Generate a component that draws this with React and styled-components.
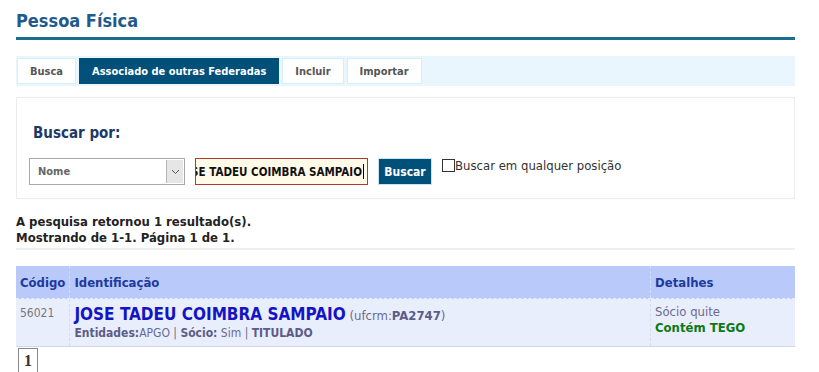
import React from "react";
import styled, { createGlobalStyle } from "styled-components";

const GlobalStyle = createGlobalStyle`
  body {
    margin: 0;
    background: #ffffff;
    font-family: "DejaVu Sans", Verdana, sans-serif;
    font-stretch: condensed;
    color: #222;
  }
`;

const Page = styled.div`
  padding: 0 24px 0 16px;
  width: 779px;
`;

const Title = styled.h1`
  margin: 0;
  padding-top: 10px;
  height: 27px;
  font-size: 18px;
  font-weight: bold;
  color: #1f5a8c;
  border-bottom: 3px solid #1a6e8e;
`;

const TabBar = styled.div`
  margin-top: 16px;
  height: 30px;
  background: #eaf6fd;
  display: flex;
  align-items: center;
  gap: 3px;
  padding-left: 1px;
`;

const Tab = styled.div`
  height: 24px;
  padding: 0 12px;
  display: flex;
  align-items: center;
  font-size: 11px;
  font-weight: bold;
  background: ${(p) => (p.$active ? "#00507a" : "#ffffff")};
  color: ${(p) => (p.$active ? "#ffffff" : "#555")};
  border: 1px solid ${(p) => (p.$active ? "#00507a" : "#d6eefa")};
`;

const SearchPanel = styled.div`
  margin-top: 11px;
  height: 100px;
  border: 1px solid #ececec;
  padding: 0 12px;
`;

const SearchLabel = styled.div`
  margin-top: 26px;
  padding-left: 4px;
  font-size: 15px;
  font-weight: bold;
  color: #1c3a66;
`;

const Controls = styled.div`
  margin-top: 16px;
  display: flex;
  align-items: flex-start;
`;

const Select = styled.div`
  width: 146px;
  height: 25px;
  border: 1px solid #a9a9a9;
  display: flex;
  align-items: center;
  justify-content: space-between;
  font-size: 11px;
  font-weight: bold;
  color: #666;
  padding-left: 8px;
`;

const SelectArrow = styled.div`
  width: 16px;
  height: 23px;
  margin-right: 1px;
  background: #e6e6e6;
  border-left: 1px solid #b5b5b5;
  display: flex;
  align-items: center;
  justify-content: center;
`;

const TextField = styled.div`
  margin-left: 10px;
  width: 168px;
  height: 25px;
  border: 1px solid #b03a2e;
  background: #fffbe8;
  font-size: 11.5px;
  font-weight: bold;
  color: #111;
  display: flex;
  align-items: center;
  justify-content: flex-end;
  overflow: hidden;
  white-space: nowrap;
  padding-right: 3px;
`;

const FieldText = styled.span`
  flex-shrink: 0;
`;

const Caret = styled.span`
  display: inline-block;
  flex-shrink: 0;
  width: 1px;
  height: 15px;
  background: #000;
  margin-left: 1px;
`;

const Button = styled.div`
  margin-left: 10px;
  width: 52px;
  height: 25px;
  background: #00507a;
  border: 1px solid #c8e4f4;
  color: #fff;
  font-size: 12px;
  font-weight: bold;
  display: flex;
  align-items: center;
  justify-content: center;
`;

const CheckLabel = styled.label`
  margin-left: 10px;
  display: flex;
  align-items: flex-start;
  font-size: 13px;
  color: #333;
  line-height: 15px;
`;

const CheckBox = styled.span`
  width: 11px;
  height: 11px;
  border: 1px solid #333;
  margin-top: 1px;
`;

const Summary = styled.div`
  margin-top: 15px;
  font-size: 13px;
  font-weight: bold;
  line-height: 16px;
  color: #222;
  padding-bottom: 2px;
  border-bottom: 2px solid #efefef;
`;

const Table = styled.table`
  margin-top: 16px;
  width: 100%;
  border-collapse: collapse;
  font-size: 13px;
`;

const HeadCell = styled.th`
  height: 32px;
  padding: 0 4px;
  text-align: left;
  background: #b9c9fa;
  color: #1d3a9e;
  font-weight: bold;
  border-left: 1px dashed #d2dcfb;
  border-bottom: 1px dashed #e6ecfd;
  width: ${(p) => p.$width || "auto"};
  &:first-child {
    border-left: none;
  }
`;

const Cell = styled.td`
  height: 42px;
  padding: 5px 4px 0;
  vertical-align: top;
  background: #e9eefd;
  border-left: 1px dashed #d6dcec;
  border-bottom: 1px solid #d4d8e4;
  &:first-child {
    border-left: none;
  }
`;

const Code = styled.div`
  font-size: 12px;
  color: #777;
  padding-top: 2px;
`;

const NameLine = styled.div`
  line-height: 20px;
`;

const Name = styled.span`
  font-size: 17px;
  font-weight: bold;
  color: #1414c4;
`;

const Meta = styled.span`
  font-size: 13px;
  color: #6a6a90;
  b {
    color: #5c5c88;
  }
`;

const SubLine = styled.div`
  font-size: 12px;
  color: #6a6a90;
  line-height: 15px;
  b {
    color: #5c5c88;
  }
`;

const Detail = styled.div`
  font-size: 13px;
  line-height: 16px;
  color: ${(p) => p.$color || "#6a6a90"};
  font-weight: ${(p) => (p.$bold ? "bold" : "normal")};
`;

const PageBox = styled.div`
  margin-top: 1px;
  margin-left: 2px;
  width: 18px;
  height: 23px;
  border: 1px solid #888;
  display: flex;
  align-items: center;
  justify-content: center;
  font-family: "Liberation Serif", serif;
  font-weight: bold;
  font-size: 16px;
  color: #333;
`;

export default function App() {
  const tabs = [
    { id: "busca", label: "Busca" },
    { id: "assoc", label: "Associado de outras Federadas", active: true },
    { id: "incluir", label: "Incluir" },
    { id: "importar", label: "Importar" },
  ];

  return (
    <>
      <GlobalStyle />
      <Page>
        <Title>Pessoa Física</Title>
        <TabBar>
          {tabs.map((tab) => (
            <Tab key={tab.id} $active={tab.active}>
              {tab.label}
            </Tab>
          ))}
        </TabBar>
        <SearchPanel>
          <SearchLabel>Buscar por:</SearchLabel>
          <Controls>
            <Select>
              Nome
              <SelectArrow>
                <svg width="9" height="6" viewBox="0 0 9 6">
                  <path d="M1 1 L4.5 4.5 L8 1" fill="none" stroke="#555" strokeWidth="1" />
                </svg>
              </SelectArrow>
            </Select>
            <TextField>
              <FieldText>JOSE TADEU COIMBRA SAMPAIO</FieldText>
              <Caret />
            </TextField>
            <Button>Buscar</Button>
            <CheckLabel>
              <CheckBox />
              Buscar em qualquer posição
            </CheckLabel>
          </Controls>
        </SearchPanel>
        <Summary>
          A pesquisa retornou 1 resultado(s).
          <br />
          Mostrando de 1-1. Página 1 de 1.
        </Summary>
        <Table>
          <thead>
            <tr>
              <HeadCell $width="43px">Código</HeadCell>
              <HeadCell>Identificação</HeadCell>
              <HeadCell $width="136px">Detalhes</HeadCell>
            </tr>
          </thead>
          <tbody>
            <tr>
              <Cell>
                <Code>56021</Code>
              </Cell>
              <Cell>
                <NameLine>
                  <Name>JOSE TADEU COIMBRA SAMPAIO</Name>{" "}
                  <Meta>
                    (ufcrm:<b>PA2747</b>)
                  </Meta>
                </NameLine>
                <SubLine>
                  <b>Entidades:</b>APGO | <b>Sócio:</b> Sim | <b>TITULADO</b>
                </SubLine>
              </Cell>
              <Cell>
                <Detail>Sócio quite</Detail>
                <Detail $color="#0c7a12" $bold>
                  Contém TEGO
                </Detail>
              </Cell>
            </tr>
          </tbody>
        </Table>
        <PageBox>1</PageBox>
      </Page>
    </>
  );
}
